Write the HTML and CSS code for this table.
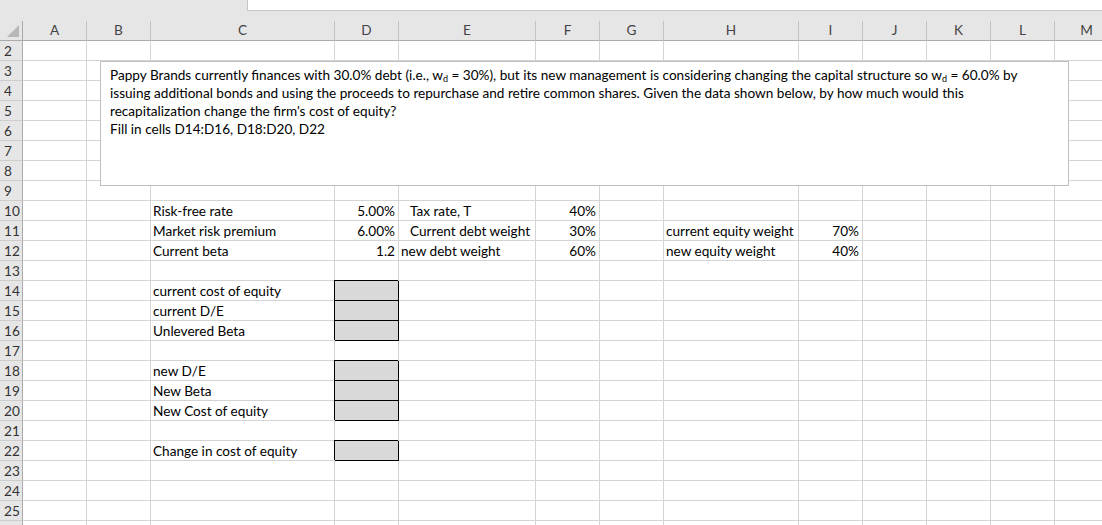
FILE: index.html
```html
<!DOCTYPE html>
<html>
<head lang="en">
  <meta charset="UTF-8">
  <title>Sheet1</title>
  <link rel="stylesheet" href="styles.css">
</head>
<body>
<div class="topbar"><div class="namebox"></div></div>

<div class="sheet">
  <div class="row head">
    <div class="corner"><svg width="12" height="12" viewBox="0 0 12 12"><polygon points="12,0 12,12 0,12" fill="#b8b8b8"/></svg></div>
    <div>A</div><div>B</div><div>C</div><div>D</div><div>E</div><div>F</div><div>G</div><div>H</div><div>I</div><div>J</div><div>K</div><div>L</div><div>M</div>
  </div>
  <div class="row"><div class="rh">2</div><div></div><div></div><div></div><div></div><div></div><div></div><div></div><div></div><div></div><div></div><div></div><div></div><div></div></div>
  <div class="row"><div class="rh">3</div><div></div><div></div><div></div><div></div><div></div><div></div><div></div><div></div><div></div><div></div><div></div><div></div><div></div></div>
  <div class="row"><div class="rh">4</div><div></div><div></div><div></div><div></div><div></div><div></div><div></div><div></div><div></div><div></div><div></div><div></div><div></div></div>
  <div class="row"><div class="rh">5</div><div></div><div></div><div></div><div></div><div></div><div></div><div></div><div></div><div></div><div></div><div></div><div></div><div></div></div>
  <div class="row"><div class="rh">6</div><div></div><div></div><div></div><div></div><div></div><div></div><div></div><div></div><div></div><div></div><div></div><div></div><div></div></div>
  <div class="row"><div class="rh">7</div><div></div><div></div><div></div><div></div><div></div><div></div><div></div><div></div><div></div><div></div><div></div><div></div><div></div></div>
  <div class="row"><div class="rh">8</div><div></div><div></div><div></div><div></div><div></div><div></div><div></div><div></div><div></div><div></div><div></div><div></div><div></div></div>
  <div class="row"><div class="rh">9</div><div></div><div></div><div></div><div></div><div></div><div></div><div></div><div></div><div></div><div></div><div></div><div></div><div></div></div>
  <div class="row"><div class="rh">10</div><div></div><div></div><div>Risk-free rate</div><div class="num">5.00%</div><div class="indent">Tax rate, T</div><div class="num">40%</div><div></div><div></div><div></div><div></div><div></div><div></div><div></div></div>
  <div class="row"><div class="rh">11</div><div></div><div></div><div>Market risk premium</div><div class="num">6.00%</div><div class="indent">Current debt weight</div><div class="num">30%</div><div></div><div>current equity weight</div><div class="num">70%</div><div></div><div></div><div></div><div></div></div>
  <div class="row"><div class="rh">12</div><div></div><div></div><div>Current beta</div><div class="num">1.2</div><div>new debt weight</div><div class="num">60%</div><div></div><div>new equity weight</div><div class="num">40%</div><div></div><div></div><div></div><div></div></div>
  <div class="row"><div class="rh">13</div><div></div><div></div><div></div><div></div><div></div><div></div><div></div><div></div><div></div><div></div><div></div><div></div><div></div></div>
  <div class="row"><div class="rh">14</div><div></div><div></div><div>current cost of equity</div><div class="input"></div><div></div><div></div><div></div><div></div><div></div><div></div><div></div><div></div><div></div></div>
  <div class="row"><div class="rh">15</div><div></div><div></div><div>current D/E</div><div class="input"></div><div></div><div></div><div></div><div></div><div></div><div></div><div></div><div></div><div></div></div>
  <div class="row"><div class="rh">16</div><div></div><div></div><div>Unlevered Beta</div><div class="input"></div><div></div><div></div><div></div><div></div><div></div><div></div><div></div><div></div><div></div></div>
  <div class="row"><div class="rh">17</div><div></div><div></div><div></div><div></div><div></div><div></div><div></div><div></div><div></div><div></div><div></div><div></div><div></div></div>
  <div class="row"><div class="rh">18</div><div></div><div></div><div>new D/E</div><div class="input"></div><div></div><div></div><div></div><div></div><div></div><div></div><div></div><div></div><div></div></div>
  <div class="row"><div class="rh">19</div><div></div><div></div><div>New Beta</div><div class="input"></div><div></div><div></div><div></div><div></div><div></div><div></div><div></div><div></div><div></div></div>
  <div class="row"><div class="rh">20</div><div></div><div></div><div>New Cost of equity</div><div class="input"></div><div></div><div></div><div></div><div></div><div></div><div></div><div></div><div></div><div></div></div>
  <div class="row"><div class="rh">21</div><div></div><div></div><div></div><div></div><div></div><div></div><div></div><div></div><div></div><div></div><div></div><div></div><div></div></div>
  <div class="row"><div class="rh">22</div><div></div><div></div><div>Change in cost of equity</div><div class="input"></div><div></div><div></div><div></div><div></div><div></div><div></div><div></div><div></div><div></div></div>
  <div class="row"><div class="rh">23</div><div></div><div></div><div></div><div></div><div></div><div></div><div></div><div></div><div></div><div></div><div></div><div></div><div></div></div>
  <div class="row"><div class="rh">24</div><div></div><div></div><div></div><div></div><div></div><div></div><div></div><div></div><div></div><div></div><div></div><div></div><div></div></div>
  <div class="row"><div class="rh">25</div><div></div><div></div><div></div><div></div><div></div><div></div><div></div><div></div><div></div><div></div><div></div><div></div><div></div></div>
  <div class="row"><div class="rh"></div><div></div><div></div><div></div><div></div><div></div><div></div><div></div><div></div><div></div><div></div><div></div><div></div><div></div></div>
</div>

<!--文本框-->
<div class="note">
  <p>Pappy Brands currently finances with 30.0% debt (i.e., w<sub>d</sub> = 30%), but its new management is considering changing the capital structure so w<sub>d</sub> = 60.0% by</p>
  <p>issuing additional bonds and using the proceeds to repurchase and retire common shares. Given the data shown below, by how much would this</p>
  <p>recapitalization change the firm's cost of equity?</p>
  <p>Fill in cells D14:D16, D18:D20, D22</p>
</div>
</body>
</html>
```

FILE: styles.css
```css
* {
  margin: 0;
  padding: 0;
  box-sizing: border-box;
}

html, body {
  width: 1102px;
  height: 525px;
  overflow: hidden;
  background: #fff;
}

body {
  position: relative;
  font-family: Lato, "Liberation Sans", sans-serif;
  font-size: 13.6px;
  color: #000;
}

.topbar {
  height: 21px;
  background: #e6e6e6;
}

.namebox {
  margin-left: 247px;
  height: 11px;
  background: #fff;
  border-left: 1px solid #c6c6c6;
  border-bottom: 1px solid #c6c6c6;
}

.row {
  display: grid;
  grid-template-columns: 23px 64px 64px 184px 64px 137px 64px 64px 135px 64px 64px 64px 64px 64px;
  height: 20px;
}

.row > div {
  border-right: 1px solid #d4d4d4;
  border-bottom: 1px solid #d4d4d4;
  padding: 1px 2px 0 2px;
  line-height: 18px;
  white-space: nowrap;
  overflow: hidden;
}

.row > div.num {
  text-align: right;
  padding-right: 3px;
}

.row > div.indent {
  padding-left: 11px;
}

.row > div.input {
  background: #d9d9d9;
  border-right: 1px solid #000;
  border-bottom: 1px solid #000;
  box-shadow: -1px -1px 0 #000;
  overflow: visible;
}

.row > div.rh {
  background: #e6e6e6;
  color: #333;
  border-right: 1px solid #ababab;
  border-bottom: 1px solid #cdcdcd;
  padding-left: 4px;
}

.head > div {
  background: #e6e6e6;
  color: #444;
  text-align: center;
  border-right: 1px solid #c4c4c4;
  border-bottom: 1px solid #ababab;
  padding-top: 0;
}

.head > div.corner {
  display: flex;
  justify-content: flex-end;
  align-items: flex-end;
  padding: 0 3px 3px 0;
  border-right: 1px solid #ababab;
}

.corner svg {
  display: block;
}

.note {
  position: absolute;
  left: 100px;
  top: 61px;
  width: 969px;
  height: 125px;
  background: #fff;
  border: 1px solid #bfbfbf;
  padding: 4px 9px;
  line-height: 18px;
}

.note p {
  white-space: nowrap;
}

.note sub {
  font-size: 9px;
  line-height: 0;
  vertical-align: -2px;
}
```
